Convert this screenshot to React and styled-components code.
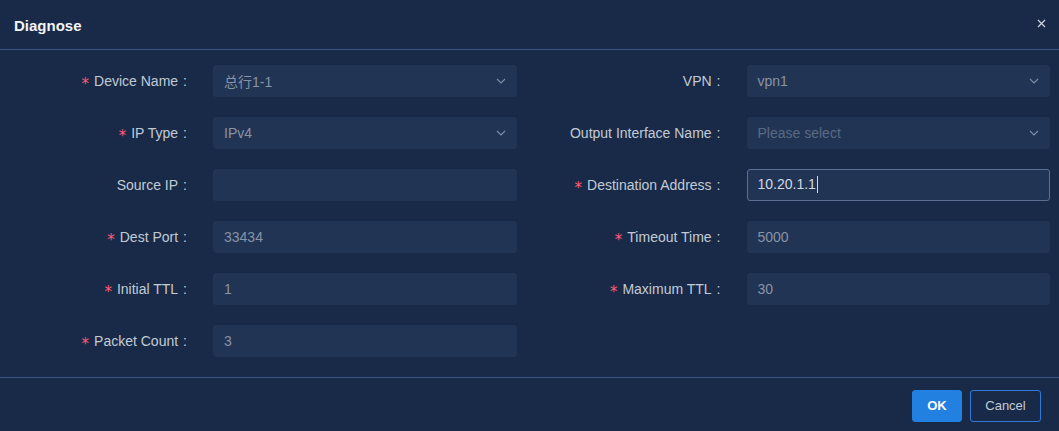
import React from "react";
import styled, { createGlobalStyle } from "styled-components";

const GlobalStyle = createGlobalStyle`
  html, body {
    margin: 0;
    padding: 0;
    background: #182a47;
  }
  body {
    font-family: "Liberation Sans", "Noto Sans CJK SC", Arial, sans-serif;
    font-size: 14px;
  }
`;

const Modal = styled.div`
  width: 1059px;
  height: 431px;
  background: #182a47;
  display: flex;
  flex-direction: column;
  box-sizing: border-box;
`;

const Header = styled.div`
  height: 49px;
  border-bottom: 1px solid #3a5783;
  display: flex;
  align-items: center;
  justify-content: space-between;
  padding: 0 12px 0 14px;
  box-sizing: content-box;
`;

const Title = styled.div`
  color: #f2f4f8;
  font-weight: bold;
  font-size: 15px;
  padding-top: 1px;
`;

const CloseBtn = styled.button`
  background: none;
  border: none;
  padding: 0;
  width: 12px;
  height: 12px;
  display: flex;
  align-items: center;
  justify-content: center;
  cursor: pointer;
  margin-bottom: 3px;
`;

const Body = styled.div`
  flex: 1;
  padding: 15px 9px 0 13px;
  display: grid;
  grid-template-columns: 1fr 1fr;
  column-gap: 30px;
  align-content: start;
`;

const Row = styled.div`
  display: flex;
  align-items: center;
  height: 32px;
  margin-bottom: 20px;
`;

const Label = styled.div`
  width: 200px;
  flex: none;
  box-sizing: border-box;
  padding-right: 26px;
  text-align: right;
  color: #c2cad6;
  white-space: nowrap;
  font-size: 14px;
`;

const Star = styled.span`
  color: #ff5a76;
  font-family: "DejaVu Sans", sans-serif;
  font-size: 15px;
  margin-right: 5px;
  position: relative;
  top: 3px;
`;

const Colon = styled.span`
  margin-left: 5px;
`;

const Field = styled.div`
  flex: 1;
  height: 32px;
  box-sizing: border-box;
  border-radius: 3px;
  background: #213454;
  border: 1px solid ${(p) => (p.$focused ? "#5b6f92" : "#213454")};
  display: flex;
  align-items: center;
  padding: 0 10px 0 10px;
  color: ${(p) => (p.$focused ? "#d2d8e2" : "#8893a6")};
`;

const Value = styled.span`
  flex: 1;
  white-space: nowrap;
`;

const Placeholder = styled.span`
  flex: 1;
  color: #5a6a83;
`;

const Caret = styled.span`
  display: inline-block;
  width: 1px;
  height: 17px;
  background: #d2d8e2;
  vertical-align: middle;
  margin-left: 1px;
  position: relative;
  top: -1px;
`;

const Footer = styled.div`
  border-top: 1px solid #3a5783;
  height: 53px;
  display: flex;
  align-items: center;
  justify-content: flex-end;
  gap: 8px;
  padding: 0 18px 0 0;
`;

const Button = styled.button`
  height: 32px;
  width: ${(p) => p.$w}px;
  box-sizing: border-box;
  border-radius: 3px;
  font-family: "Liberation Sans", Arial, sans-serif;
  font-size: 13px;
  padding: 0;
  cursor: pointer;
  background: ${(p) => (p.$primary ? "#2180e0" : "transparent")};
  border: 1px solid ${(p) => (p.$primary ? "#2180e0" : "#2f7ad6")};
  color: ${(p) => (p.$primary ? "#ffffff" : "#c2cad6")};
  font-weight: ${(p) => (p.$primary ? "bold" : "normal")};
  margin-top: 2px;
`;

const Chevron = () => (
  <svg width="10" height="6" viewBox="0 0 10 6" fill="none">
    <path d="M1 1l4 4 4-4" stroke="#8190a6" strokeWidth="1.1" />
  </svg>
);

const FormRow = ({ label, required, value, placeholder, select, focused }) => (
  <Row>
    <Label>
      {required && <Star>*</Star>}
      {label}
      <Colon>:</Colon>
    </Label>
    <Field $focused={focused}>
      {value !== undefined ? (
        <Value>
          {value}
          {focused && <Caret />}
        </Value>
      ) : placeholder ? (
        <Placeholder>{placeholder}</Placeholder>
      ) : (
        <Value />
      )}
      {select && <Chevron />}
    </Field>
  </Row>
);

const rows = [
  { label: "Device Name", required: true, value: "总行1-1", select: true },
  { label: "VPN", value: "vpn1", select: true },
  { label: "IP Type", required: true, value: "IPv4", select: true },
  { label: "Output Interface Name", placeholder: "Please select", select: true },
  { label: "Source IP" },
  { label: "Destination Address", required: true, value: "10.20.1.1", focused: true },
  { label: "Dest Port", required: true, value: "33434" },
  { label: "Timeout Time", required: true, value: "5000" },
  { label: "Initial TTL", required: true, value: "1" },
  { label: "Maximum TTL", required: true, value: "30" },
  { label: "Packet Count", required: true, value: "3" },
];

export default function App() {
  return (
    <Modal>
      <GlobalStyle />
      <Header>
        <Title>Diagnose</Title>
        <CloseBtn aria-label="close">
          <svg width="9" height="9" viewBox="0 0 9 9">
            <path d="M1 1l7 7M8 1l-7 7" stroke="#c9d0db" strokeWidth="1.3" />
          </svg>
        </CloseBtn>
      </Header>
      <Body>
        {rows.map((r) => (
          <FormRow key={r.label} {...r} />
        ))}
      </Body>
      <Footer>
        <Button $primary $w={50}>OK</Button>
        <Button $w={71}>Cancel</Button>
      </Footer>
    </Modal>
  );
}
